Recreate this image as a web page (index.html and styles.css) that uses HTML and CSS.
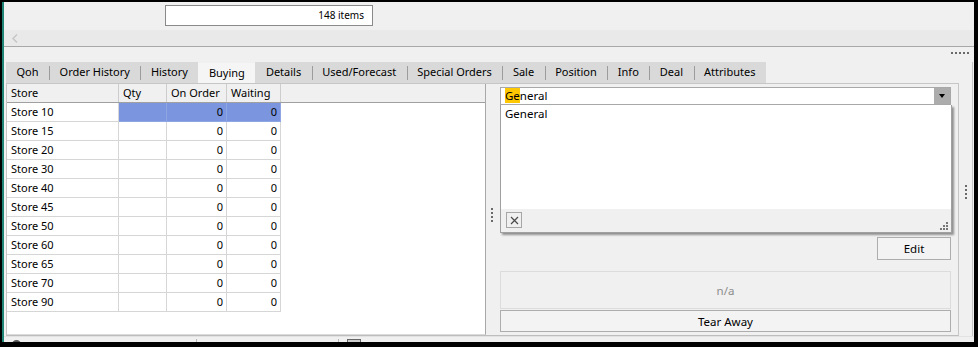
FILE: index.html
```html
<!doctype html>
<html>
	<head>
		<meta charset="utf-8">
		<title>Item Buying</title>
		<link rel="stylesheet" href="styles.css">
	</head>
	<body>
		<div class="window">
			<div class="toolbar">
				<div class="count">148 items</div>
			</div>
			<div class="hscroll">
				<svg class="arrow" width="6" height="9" viewBox="0 0 6 9"><path d="M5 0.5 L1 4.5 L5 8.5" fill="none" stroke="#c4c4c4" stroke-width="1.4"/></svg>
			</div>
			<div class="griprow"><span class="hdots"><i></i><i></i><i></i><i></i><i></i></span></div>
			<div class="main">
				<div class="tabpanel">
					<div class="tabs">
						<div class="tab">Qoh</div>
						<div class="tab">Order History</div>
						<div class="tab">History</div>
						<div class="tab active">Buying</div>
						<div class="tab">Details</div>
						<div class="tab">Used/Forecast</div>
						<div class="tab">Special Orders</div>
						<div class="tab">Sale</div>
						<div class="tab">Position</div>
						<div class="tab">Info</div>
						<div class="tab">Deal</div>
						<div class="tab">Attributes</div>
					</div>
					<div class="content">
						<div class="grid">
							<div class="row head">
								<div class="cell">Store</div>
								<div class="cell">Qty</div>
								<div class="cell">On Order</div>
								<div class="cell">Waiting</div>
							</div>
							<div class="row selected">
								<div class="cell">Store 10</div>
								<div class="cell num"></div>
								<div class="cell num">0</div>
								<div class="cell num">0</div>
							</div>
							<div class="row">
								<div class="cell">Store 15</div>
								<div class="cell num"></div>
								<div class="cell num">0</div>
								<div class="cell num">0</div>
							</div>
							<div class="row">
								<div class="cell">Store 20</div>
								<div class="cell num"></div>
								<div class="cell num">0</div>
								<div class="cell num">0</div>
							</div>
							<div class="row">
								<div class="cell">Store 30</div>
								<div class="cell num"></div>
								<div class="cell num">0</div>
								<div class="cell num">0</div>
							</div>
							<div class="row">
								<div class="cell">Store 40</div>
								<div class="cell num"></div>
								<div class="cell num">0</div>
								<div class="cell num">0</div>
							</div>
							<div class="row">
								<div class="cell">Store 45</div>
								<div class="cell num"></div>
								<div class="cell num">0</div>
								<div class="cell num">0</div>
							</div>
							<div class="row">
								<div class="cell">Store 50</div>
								<div class="cell num"></div>
								<div class="cell num">0</div>
								<div class="cell num">0</div>
							</div>
							<div class="row">
								<div class="cell">Store 60</div>
								<div class="cell num"></div>
								<div class="cell num">0</div>
								<div class="cell num">0</div>
							</div>
							<div class="row">
								<div class="cell">Store 65</div>
								<div class="cell num"></div>
								<div class="cell num">0</div>
								<div class="cell num">0</div>
							</div>
							<div class="row">
								<div class="cell">Store 70</div>
								<div class="cell num"></div>
								<div class="cell num">0</div>
								<div class="cell num">0</div>
							</div>
							<div class="row">
								<div class="cell">Store 90</div>
								<div class="cell num"></div>
								<div class="cell num">0</div>
								<div class="cell num">0</div>
							</div>
						</div>
						<div class="vsplit"><span class="vdots"><i></i><i></i><i></i><i></i></span></div>
						<div class="pane">
							<div class="combo">
								<div class="combo-text"><span class="hl">Ge</span>neral</div>
								<div class="combo-btn"></div>
								<div class="dropdown">
									<div class="dd-list">
										<div class="dd-item">General</div>
									</div>
									<div class="dd-foot">
										<span class="dd-close">
											<svg width="9" height="9" viewBox="0 0 9 9"><path d="M1 1 L8 8 M8 1 L1 8" stroke="#4a4a4a" stroke-width="1.2"/></svg>
										</span>
										<span class="dd-grip"></span>
									</div>
								</div>
							</div>
							<div class="edit-row"><button class="btn edit">Edit</button></div>
							<div class="na">n/a</div>
							<button class="btn tear">Tear Away</button>
						</div>
					</div>
				</div>
				<div class="vsplit outer"><span class="vdots"><i></i><i></i><i></i><i></i></span></div>
				<div class="redge"></div>
			</div>
			<div class="status">
				<span class="st-dot"></span>
				<span class="st-sep"></span>
				<span class="st-sep second"></span>
				<span class="st-icon"></span>
			</div>
		</div>
	</body>
</html>
```

FILE: styles.css
```css
html, body {
	margin: 0px;
	background: #000;
	font-family: "Noto Sans", "Open Sans", sans-serif;
	font-size: 11px;
	color: #000;
}
.window {
	margin: 2px 4px 0px 2px;
	height: 340px;
	border-left: 2px solid #1f8577;
	background: #f0f0f0;
	display: flex;
	flex-direction: column;
	overflow: hidden;
}
.toolbar {
	height: 28px;
	flex: none;
}
.count {
	margin: 3px 0px 0px 161px;
	width: 198px;
	height: 19px;
	border: 1px solid #8a8a8a;
	background: #fff;
	text-align: right;
	padding-right: 8px;
	font-size: 10px;
	line-height: 19px;
}
.hscroll {
	height: 16px;
	flex: none;
	background: #e9e9e9;
	border-bottom: 1px solid #a8a8a8;
	display: flex;
	align-items: center;
	padding-left: 8px;
}
.griprow {
	height: 15px;
	flex: none;
	display: flex;
	justify-content: flex-end;
	align-items: center;
	padding-right: 5px;
}
.hdots {
	display: flex;
	gap: 2px;
	margin-top: -3px;
}
.hdots i, .vdots i {
	display: block;
	width: 2px;
	height: 2px;
	background: #6a6a6a;
}
.main {
	flex: 1;
	display: flex;
	min-height: 0;
}
.tabpanel {
	margin-left: 2px;
	width: 953px;
	display: flex;
	flex-direction: column;
}
.tabs {
	height: 21px;
	flex: none;
	display: flex;
}
.tab {
	position: relative;
	padding: 0px 10.5px;
	line-height: 20px;
	background: #d9d9d9;
	white-space: nowrap;
}
.tab + .tab::before {
	content: "";
	position: absolute;
	left: 0px;
	top: 4px;
	height: 14px;
	border-left: 1px solid #9c9c9c;
}
.tab.active {
	background: #f5f5f5;
	margin-top: 1px;
	line-height: 19px;
}
.tab.active::before, .tab.active + .tab::before {
	display: none;
}
.content {
	flex: 1;
	display: flex;
	border: 1px solid #c6c6c6;
	border-bottom-color: #bdbdbd;
	min-height: 0;
}
.grid {
	width: 478px;
	background: #fff;
	border-right: 1px solid #a8a8a8;
	border-bottom: 1px solid #dadada;
}
.row {
	display: grid;
	grid-template-columns: 112px 48px 60px 54px;
	height: 19px;
}
.row.head {
	background: #f0f0f0;
	border-bottom: 1px solid #a0a0a0;
	height: 18px;
}
.cell {
	border-right: 1px solid #d6d6d6;
	border-bottom: 1px solid #d6d6d6;
	padding: 0px 3px 0px 4px;
	line-height: 18px;
	white-space: nowrap;
	overflow: hidden;
}
.head .cell {
	border-bottom: none;
	border-right-color: #cdcdcd;
	line-height: 18px;
}
.cell.num {
	text-align: right;
}
.selected .cell.num {
	background: #7b96df;
	border-right-color: #8fa6e4;
	border-bottom-color: #8fa6e4;
}
.vsplit {
	width: 12px;
	flex: none;
	display: flex;
	align-items: center;
	justify-content: center;
}
.vdots {
	display: flex;
	flex-direction: column;
	gap: 2px;
	margin-top: 10px;
}
.vsplit.outer {
	width: 13px;
}
.vsplit.outer .vdots {
	margin-top: -14px;
}
.redge {
	width: 1px;
	border-left: 1px solid #c4c4c4;
}
.pane {
	flex: 1;
	display: flex;
	flex-direction: column;
	padding: 3px 7px 3px 2px;
}
.combo {
	position: relative;
	height: 16px;
	border: 1px solid #a8a8a8;
	background: #fff;
	display: flex;
}
.combo-text {
	flex: 1;
	padding-left: 4px;
	line-height: 16px;
	font-size: 11.5px;
}
.hl {
	background: #ffc800;
}
.combo-btn {
	width: 16px;
	background: #acacac;
	position: relative;
}
.combo-btn::after {
	content: "";
	position: absolute;
	left: 5px;
	top: 6px;
	border-left: 3px solid transparent;
	border-right: 3px solid transparent;
	border-top: 4px solid #000;
}
.dropdown {
	position: absolute;
	left: -1px;
	top: 17px;
	width: 450px;
	height: 127px;
	border: 1px solid #a0a0a0;
	border-top: none;
	background: #fff;
	box-shadow: 2px 2px 2px rgba(0, 0, 0, 0.4);
	display: flex;
	flex-direction: column;
	z-index: 2;
}
.dd-list {
	flex: 1;
}
.dd-item {
	padding: 1px 4px;
	line-height: 16px;
	font-size: 11.5px;
}
.dd-foot {
	height: 23px;
	background: #f0f0f0;
	position: relative;
}
.dd-close {
	position: absolute;
	left: 5px;
	top: 3px;
	width: 14px;
	height: 14px;
	border: 1px solid #a6a6a6;
	display: flex;
	align-items: center;
	justify-content: center;
}
.dd-grip {
	position: absolute;
	right: 3px;
	bottom: 2px;
	width: 8px;
	height: 8px;
	background:
		linear-gradient(#777, #777) 6px 0px / 2px 2px no-repeat,
		linear-gradient(#777, #777) 3px 3px / 2px 2px no-repeat,
		linear-gradient(#777, #777) 6px 3px / 2px 2px no-repeat,
		linear-gradient(#777, #777) 0px 6px / 2px 2px no-repeat,
		linear-gradient(#777, #777) 3px 6px / 2px 2px no-repeat,
		linear-gradient(#777, #777) 6px 6px / 2px 2px no-repeat;
}
.edit-row {
	margin-top: auto;
	display: flex;
	justify-content: flex-end;
}
.btn {
	font-family: inherit;
	font-size: 11.5px;
	color: #000;
	background: #f3f3f3;
	border: 1px solid #adadad;
	padding: 0px;
	margin: 0px;
}
.edit {
	width: 74px;
	height: 23px;
}
.na {
	margin-top: 11px;
	height: 36px;
	border: 1px solid #dcdcdc;
	color: #8c8c8c;
	text-align: center;
	line-height: 38px;
	font-size: 11.5px;
}
.tear {
	margin-top: 1px;
	height: 22px;
	width: 100%;
}
.status {
	height: 5px;
	flex: none;
	position: relative;
	border-top: 1px solid #e2e2e2;
}
.st-dot {
	position: absolute;
	left: 8px;
	top: 3px;
	width: 9px;
	height: 9px;
	border-radius: 50%;
	background: #555;
}
.st-sep {
	position: absolute;
	left: 192px;
	top: 2px;
	height: 6px;
	border-left: 1px solid #b8b8b8;
}
.st-sep.second {
	left: 334px;
}
.st-icon {
	position: absolute;
	left: 343px;
	top: 2px;
	width: 12px;
	height: 6px;
	border: 1px solid #666;
	background: #ccc;
}
```
